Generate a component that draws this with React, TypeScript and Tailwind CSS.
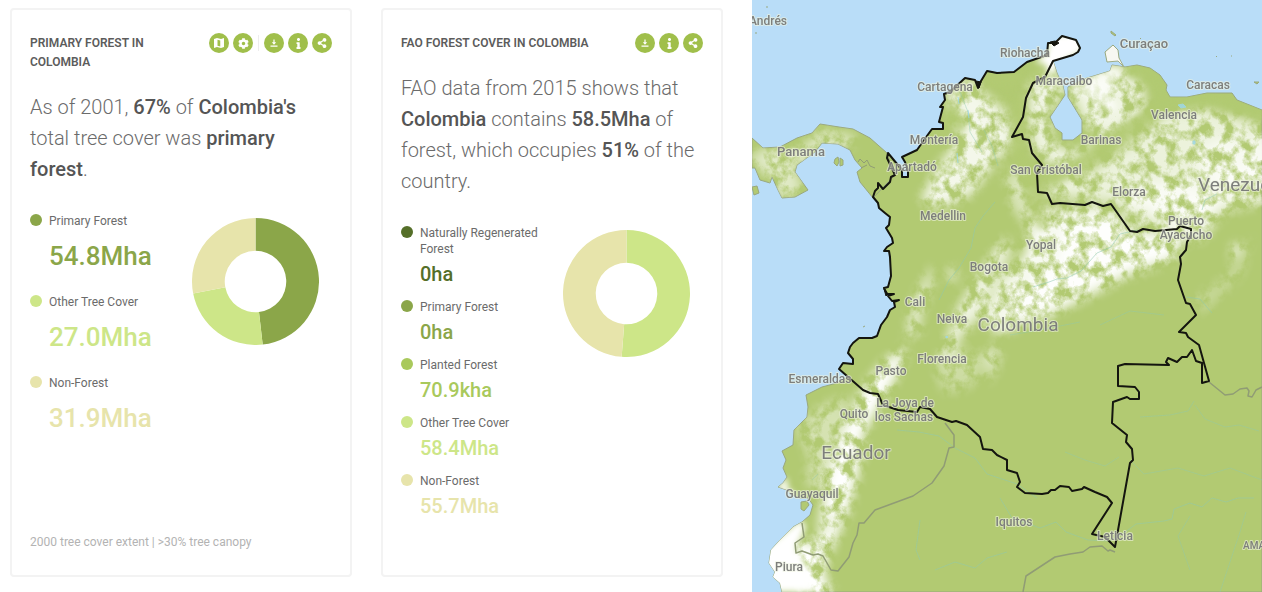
import React from "react";
import { FaCog, FaInfo, FaShareAlt } from "react-icons/fa";

type Slice = { label: string; value: string; share: number; color: string; text: string; dot: string };

const primary: Slice[] = [
  { label: "Primary Forest", value: "54.8Mha", share: 54.8, color: "#8ba649", text: "text-[#8ba649]", dot: "bg-[#8ba649]" },
  { label: "Other Tree Cover", value: "27.0Mha", share: 27, color: "#cde688", text: "text-[#cde688]", dot: "bg-[#cde688]" },
  { label: "Non-Forest", value: "31.9Mha", share: 31.9, color: "#e7e4ab", text: "text-[#e7e4ab]", dot: "bg-[#e7e4ab]" },
];

const fao: Slice[] = [
  { label: "Naturally Regenerated Forest", value: "0ha", share: 0, color: "#556f29", text: "text-[#556f29]", dot: "bg-[#556f29]" },
  { label: "Primary Forest", value: "0ha", share: 0, color: "#8ba649", text: "text-[#8ba649]", dot: "bg-[#8ba649]" },
  { label: "Planted Forest", value: "70.9kha", share: 0.07, color: "#a9c95c", text: "text-[#a9c95c]", dot: "bg-[#a9c95c]" },
  { label: "Other Tree Cover", value: "58.4Mha", share: 58.4, color: "#cde688", text: "text-[#cde688]", dot: "bg-[#cde688]" },
  { label: "Non-Forest", value: "55.7Mha", share: 55.7, color: "#e7e4ab", text: "text-[#e7e4ab]", dot: "bg-[#e7e4ab]" },
];

function Donut({ data }: { data: Slice[] }) {
  const total = data.reduce((sum, d) => sum + d.share, 0);
  const point = (t: number, r: number) =>
    `${64 + r * Math.sin(2 * Math.PI * t)} ${64 - r * Math.cos(2 * Math.PI * t)}`;
  let start = 0;
  return (
    <svg viewBox="0 0 128 128" className="mt-[5px] mr-[13px] size-[127px] shrink-0" aria-hidden="true">
      {data.map((d) => {
        const a = start;
        const b = start + d.share / total;
        start = b;
        const big = b - a > 0.5 ? 1 : 0;
        if (d.share === 0) return null;
        return (
          <path
            key={d.label}
            fill={d.color}
            d={`M${point(a, 64)}A64 64 0 ${big} 1 ${point(b, 64)}L${point(b, 31)}A31 31 0 ${big} 0 ${point(a, 31)}Z`}
          />
        );
      })}
    </svg>
  );
}

function RoundButton({ label, children }: { label: string; children: React.ReactNode }) {
  return (
    <button
      type="button"
      aria-label={label}
      className="flex size-5 items-center justify-center rounded-full bg-[#a0bf4b] text-white"
    >
      {children}
    </button>
  );
}

function MapIcon() {
  return (
    <svg viewBox="0 0 20 20" className="size-[10px]" aria-hidden="true">
      <path fill="currentColor" fillRule="evenodd" d="M0 2 6 0l8 2 6-2v18l-6 2-8-2-6 2ZM7 3.500v12l5.500 1.500V5Z" />
    </svg>
  );
}

function DownloadIcon() {
  return (
    <svg viewBox="0 0 10 10" className="size-[10px]" aria-hidden="true">
      <path fill="currentColor" d="M4.400 1.500h1.200v2.800H7.200L5 6.700 2.800 4.300h1.600ZM1.500 7.500h7v1.200h-7Z" />
    </svg>
  );
}

function Actions({ full }: { full?: boolean }) {
  return (
    <div className="flex shrink-0 items-center gap-1">
      {full && (
        <>
          <RoundButton label="Show on map"><MapIcon /></RoundButton>
          <RoundButton label="Settings"><FaCog className="size-[11px]" /></RoundButton>
          <span className="mx-px h-4 w-px bg-[#ededed]" />
        </>
      )}
      <RoundButton label="Download"><DownloadIcon /></RoundButton>
      <RoundButton label="Information"><FaInfo className="size-[11px]" /></RoundButton>
      <RoundButton label="Share"><FaShareAlt className="size-[10px]" /></RoundButton>
    </div>
  );
}

function Card(props: {
  title: string;
  full?: boolean;
  compact?: boolean;
  data: Slice[];
  note?: string;
  children: React.ReactNode;
}) {
  const { title, full, compact, data, note, children } = props;
  return (
    <article className="flex flex-col rounded-[4px] border-2 border-[#f3f3f3] px-[18px] pt-[23px] pb-[25px]">
      <header className="flex items-start justify-between gap-8">
        <h2 className="pt-px text-[12px] leading-[19px] font-semibold text-[#5c5c5c] uppercase">{title}</h2>
        <Actions full={full} />
      </header>
      <p className="mt-5 text-[20px] leading-[31px] font-light text-[#6b6b6b] [&_b]:font-medium [&_b]:text-[#555]">
        {children}
      </p>
      <div className="mt-7 flex items-start justify-between">
        <ul className={compact ? "flex w-36 flex-col gap-[13px]" : "flex w-36 flex-col gap-[22px]"}>
          {data.map((d) => (
            <li key={d.label} className="flex gap-[7px]">
              <span className={`mt-px size-3 shrink-0 rounded-full ${d.dot}`} />
              <div>
                <div className="text-[12px] leading-4 text-[#6b6b6b]">{d.label}</div>
                <div
                  className={`font-medium ${d.text} ${
                    compact ? "mt-[5px] text-[20px] leading-6" : "mt-[11px] text-[26px] leading-8"
                  }`}
                >
                  {d.value}
                </div>
              </div>
            </li>
          ))}
        </ul>
        <Donut data={data} />
      </div>
      {note && <p className="mt-auto text-[12px] leading-4 text-[#b3b3b3]">{note}</p>}
    </article>
  );
}

const colombiaCoast =
  "839,369 843,363 853,364 853,359 848,353 850,347 853,343 859,338 872,338 877,336 881,325 887,317 890,310 895,307 894,302 899,300 892,301 888,296 894,294 887,294 884,288 888,287 891,276 890,257 889,251 884,251 887,247 893,243 892,238 886,228 889,225 890,217 885,213 879,208 878,203 873,197 875,191 878,188 878,183 883,189 890,182 891,177 895,175 887,158 888,153 902,170 902,177 908,177 908,170 905,162 902,157 917,150 924,140 932,129 943,129 943,123 939,122 943,107 940,107 945,100 944,94 950,92 965,78 975,80 978,88 981,81 987,71 997,73 1014,72 1027,62 1047,55 1048,43 1055,43 1062,36 1076,40 1080,48 1078,52 1073,55 1053,61";
const colombiaInland =
  "1045,77 1033,83 1026,98 1023,117 1012,137 1022,134 1023,139 1029,140 1032,153 1042,165 1037,173 1038,192 1047,193 1052,204 1060,203 1085,205 1092,202 1103,206 1111,204 1130,231 1137,232 1143,229 1155,231 1177,229 1180,226 1191,229 1191,235 1187,242 1186,250 1180,257 1181,264 1178,280 1186,303 1190,304 1196,315 1179,332 1186,333 1188,337 1199,345 1209,381 1202,383 1202,363 1196,361 1192,350 1187,357 1182,357 1177,362 1168,358 1166,362 1169,365 1125,364 1118,366 1118,386 1135,387 1139,392 1139,399 1130,399 1127,397 1113,402 1112,423 1127,435 1126,442 1132,449 1133,460 1130,463 1115,547 1105,537 1092,534 1112,503 1107,497 1095,492 1084,487 1082,489 1072,491 1069,487 1060,486 1055,490 1051,490 1048,493 1042,494 1025,493 1017,487 1020,482 1017,473 1007,470 1007,460 997,455 992,450 983,449 980,437 967,425 956,421 952,422 937,417 930,409 920,407 917,412 898,410 883,405 878,394 870,393 863,390";
const pacificSouth =
  "782,592 780,583 773,577 775,572 769,563 771,550 780,540 793,527 802,522 810,515 813,505 808,498 800,498 793,495 787,490 778,487 783,483 787,477 783,468 786,460 782,451 793,445 794,430 807,417 808,407 806,395 822,387 837,383 848,377";
const panama =
  "752,138 763,148 780,147 797,138 812,133 820,124 839,127 853,129 870,138 887,153 895,175 873,198 860,182 857,172 862,168 855,160 850,150 838,144 822,143 815,152 797,165 795,172 808,190 795,197 782,198 778,190 772,177 770,183 760,180 755,168 752,168";
const venezuelaCoast =
  "1057,73 1063,86 1065,95 1050,117 1055,128 1062,133 1062,140 1073,140 1082,133 1082,120 1068,97 1068,87 1087,78 1110,71 1112,65 1125,67 1137,65 1150,68 1160,75 1167,85 1166,90 1170,97 1187,97 1207,93 1232,93 1237,100 1262,110";
const paraguana = "1107,62 1105,52 1113,45 1118,50 1119,58 1124,67 1118,61";

type Place = [string, number, number, number?];
const places: Place[] = [
  ["Andrés", 768, 25], ["Riohacha", 1025, 57], ["Curaçao", 1144, 48, 13], ["Cartagena", 945, 91],
  ["Maracaibo", 1064, 85], ["Caracas", 1208, 89], ["Valencia", 1174, 119], ["Montería", 934, 144],
  ["Barinas", 1101, 144], ["Panama", 801, 156, 13], ["Apartadó", 912, 171], ["San Cristóbal", 1046, 174],
  ["Elorza", 1129, 196], ["Medellin", 943, 220], ["Puerto", 1186, 225], ["Ayacucho", 1186, 239],
  ["Yopal", 1041, 249], ["Bogota", 989, 271], ["Cali", 915, 306], ["Neiva", 952, 323],
  ["Florencia", 942, 363], ["Pasto", 891, 375], ["Esmeraldas", 820, 383], ["La Joya de", 905, 407],
  ["los Sachas", 904, 421], ["Quito", 854, 418], ["Guayaquil", 812, 498], ["Iquitos", 1014, 526],
  ["Leticia", 1115, 540], ["Piura", 789, 571], ["Colombia", 1018, 331, 19], ["Ecuador", 856, 459, 19],
];

function ForestMap() {
  const land = `${pacificSouth} ${colombiaCoast} ${venezuelaCoast} 1262,592`;
  return (
    <svg
      viewBox="752 0 510 592"
      preserveAspectRatio="xMinYMin slice"
      className="block h-screen w-full bg-[#b9ddf8]"
      role="img"
      aria-label="Map of forest cover in Colombia"
    >
      <defs>
        <clipPath id="land">
          <polygon points={land} />
          <polygon points={panama} />
          <polygon points={paraguana} />
        </clipPath>
        <filter id="patchy" filterUnits="userSpaceOnUse" x="740" y="-10" width="540" height="620" colorInterpolationFilters="sRGB">
          <feGaussianBlur in="SourceGraphic" stdDeviation="6" result="soft" />
          <feTurbulence type="fractalNoise" baseFrequency="0.09 0.08" numOctaves="5" seed="21" />
          <feColorMatrix values="0 0 0 0 1  0 0 0 0 1  0 0 0 0 1  3.200 0 0 0 -0.950" result="noise" />
          <feComposite in="soft" in2="noise" operator="in" />
        </filter>
        <filter id="softly" filterUnits="userSpaceOnUse" x="740" y="-10" width="540" height="620">
          <feGaussianBlur stdDeviation="3" />
        </filter>
      </defs>

      <g fill="#b2ca72" stroke="#99a87e" strokeWidth="1">
        <polygon points={land} />
        <polygon points={panama} />
        <polygon points={paraguana} fill="#f7f8f2" />
        <path d="M801 502l6-1 2 4-5 6-3-2ZM835 159l3-2 1 5-2 4-3-3ZM840 158l3 2 0 5-3 1ZM752 187l5-1 2 7-5 2ZM1111 31l5 4-1 1-4-3ZM1254 82l5 0-2 2Z" />
        <path d="M766 7l2 0M756 32l0 2M1140 38l1 1M1216 56l1 1M1231 56l1 0M863 327l2-1" fill="none" />
      </g>

      <g clipPath="url(#land)">
        <g filter="url(#softly)" fill="#fff">
          <path d="M1035 62l12-10 2-16 28-4 8 18-26 14-8 14-6-14Z" />
          <path d="M1074 90l16-12 22-12 10 5-8 10-6 12 10 16-10 2-14-14Z" opacity=".7" />
          <path d="M765 592l-5-40 40-32 6 6-10 22 12 20 8 24Z" />
          <path d="M777 487l10-10 1 12 8 6-6 2Z" />
        </g>
        <g filter="url(#patchy)" fill="#fff">
          <path d="M946 94l24-16 12 14 26 22 8 26-20 20-24 34-34 16-18-10 20-36 20-26Z" opacity=".85" />
          <path d="M1028 86l24-14 12 16-16 28 6 28 20 8 24-10 0 16-34 14-30-20-6-34Z" opacity=".8" />
          <path d="M1066 84l58-20 20 22 2 32-28 22-30-10Z" opacity=".8" />
          <path d="M1090 172l34-24 40-34 40-6 72 20v72l-50 6-20 30-34 4-24-30-50-10-54-4 12-20Z" opacity=".75" />
          <path d="M1195 150l24-12 56 4v46l-40 2-34-14Z" opacity=".6" />
          <path d="M1120 186l70-6 20 30-24 14-50 2-16-20Z" opacity=".7" />
          <path d="M1042 210l58-6 30 26 56 2-12 28-46 16-38 20-44 22-50 16-14-16 18-38 24-24 6-30Z" opacity=".85" />
          <path d="M1060 226l56-14 20 24 46 2-10 18-46 14-40 24-50 20-30 0 26-34 26-22Z" opacity=".85" />
          <path d="M1198 180l70-20v42l-54 14-14 26-20-4Z" opacity=".5" />
          <path d="M995 250l12-14 4 16-16 30-16 34-18 20-12 26-10-2 18-50 18-30Z" opacity=".8" />
          <path d="M928 272l6-8-4 28-10 26 0 16-14 4 6-34Z" opacity=".7" />
          <path d="M900 350l8-2-10 26-16 28-26 44-2 32-16 34-20 20 8-50 12-40 26-56 20-24Z" />
          <path d="M870 390l-18 44 2 34-18 50-20 20-14 54 14 8 12-44 20-44 12-46 4-42 10-32Z" />
          <path d="M798 424l26-20 24-8-4 50-20 46-18-8 4-26-14-30Z" opacity=".45" />
          <path d="M800 534l12 12 8 20 14 30-30 4-16-44Z" />
          <path d="M762 148l36 2 24-20 36 6-10 12-30 6-22 16 8 22-24 8-8-20-24-20Z" opacity=".6" />
          <path d="M938 358l24-10 24 10-10 26-28 10-12-14Z" opacity=".35" />
          <path d="M984 352l14-8 2 16-12 24Z" opacity=".6" />
          <path d="M1004 170l22 6 8 28 20 14-4 26-24 34-6-10 14-30-22-32Z" opacity=".55" />
          <path d="M1192 300l30-20 30-46-10 40-40 40Z" opacity=".3" />
          <path d="M1230 250l8-8 4 8-8 8Z" />
          <path d="M948 274l6-10 2 12-4 8Z" />
        </g>
        <g filter="url(#softly)" fill="none" stroke="#b2ca72" strokeLinecap="round">
          <path d="M1054 178l28-16 28-20 18-14 26-16" strokeWidth="15" opacity=".85" />
          <path d="M1172 103l34-4 54 14" strokeWidth="10" opacity=".8" />
          <path d="M1130 72l20 4 14 24" strokeWidth="13" opacity=".8" />
          <path d="M1020 100l-4 46 12 20 2 34 12 24" strokeWidth="12" opacity=".7" />
          <path d="M952 112l8 12" strokeWidth="14" opacity=".8" />
          <path d="M992 80l16 2 8-6" strokeWidth="12" />
        </g>
        <g fill="none" stroke="#8fc9b0" strokeWidth=".8" opacity=".65">
          <path d="M1033 287l16-5 8-3 10-1 14-7 16-18 14-6 9-13 18-4M995 202l-12 14-8 12-4 20-12 20-10 12-10 20M1202 210l3-10 12-6M1186 297l14 2 12 14" />
          <path d="M897 430l22 2 20 4 16 12 20 10 12 16 30 10 20 14M920 520l-4 30 4 10M935 570l20-8 20 6 12-10 20-6M1000 498l12 20 28 10 16-6 10 10 22 8 22 1 14-8 12-9 28-3 8-2 2-10 16-6 12 4 10-9 14 4 12-4 16 0" />
          <path d="M1065 452l20 8 20 6 14-9M1130 460l14 14 34-6 26 8 26-8 32 12M1140 417l30-2 18-4 6-10M1195 405l10 14 20 8 14-2 20 6" opacity=".8" />
          <path d="M960 92l8 20 2 20 12 20M984 130l8 16 6 20M1010 335l30-5 40-8M1100 325l30-14 34 4M1220 592l20-60 6-20M1190 570l-12-34 12-20M812 480l6-6" opacity=".8" />
        </g>
        <path d="M1178 105l5-1 3 3-5 1ZM1193 141l2 0 0 3-2 0ZM946 336l2 1-2 1ZM958 97l1 7M968 110l1 8M957 153l1 10" fill="#9dd8ee" stroke="#9dd8ee" strokeWidth="1" opacity=".8" />
      </g>

      <g fill="none" stroke="#909c75" strokeWidth="1.500" strokeLinejoin="round">
        <polyline points="945,423 954,435 954,447 949,448 944,466 932,483 913,496 875,510 864,523 859,523 857,535 853,543 849,557 838,571 831,570 823,556 818,554 813,555 802,551 796,553 795,543 804,537 802,523" />
        <polyline points="1115,552 1110,550 1108,551 1102,546 1090,547 1083,552 1070,554 1055,557 1026,576 1023,592" />
        <polyline points="1209,382 1225,395 1233,394 1240,389 1247,388 1249,391 1248,396 1252,397 1256,390 1262,387" />
        <path d="M858 162l2-3 4 4 3-3 3 6 5 2M861 168l6-3" strokeWidth="1" />
      </g>
      <polygon
        points={`${colombiaCoast} ${colombiaInland}`}
        fill="none"
        stroke="#14150f"
        strokeWidth="2"
        strokeLinejoin="round"
      />
      <path d="M1050 42l5-1 4 2-5 3ZM884 289l4 5-2 2ZM976 81l5 1-2 6Z" fill="#14150f" stroke="#14150f" />

      <g
        fill="#7d7e7c"
        stroke="#eff3df"
        strokeOpacity=".6"
        strokeWidth="2"
        strokeLinejoin="round"
        paintOrder="stroke"
        textAnchor="middle"
      >
        {places.map(([name, x, y, size]) => (
          <text key={name} x={x} y={y} fontSize={size ?? 12} fontWeight={size === 19 ? 400 : 500}>{name}</text>
        ))}
        <text x="1198" y="191" fontSize="19" textAnchor="start">Venezuela</text>
        <text x="1243" y="549" fontSize="10" fontWeight="500" textAnchor="start">AMAZONAS</text>
      </g>
    </svg>
  );
}

export default function App() {
  return (
    <div className="grid min-h-screen grid-cols-[minmax(0,752fr)_minmax(0,510fr)] bg-white font-['Roboto','Noto_Sans',sans-serif]">
      <main className="grid grid-cols-2 gap-[29px] pt-2 pr-[29px] pb-[15px] pl-[10px]">
        <Card title="Primary forest in Colombia" full data={primary} note="2000 tree cover extent | >30% tree canopy">
          As of 2001, <b>67%</b> of <b>Colombia's</b> total tree cover was <b>primary forest</b>.
        </Card>
        <Card title="FAO forest cover in Colombia" compact data={fao}>
          FAO data from 2015 shows that <b>Colombia</b> contains <b>58.5Mha</b> of forest, which occupies <b>51%</b> of the country.
        </Card>
      </main>
      <section className="overflow-hidden">
        <ForestMap />
      </section>
    </div>
  );
}
